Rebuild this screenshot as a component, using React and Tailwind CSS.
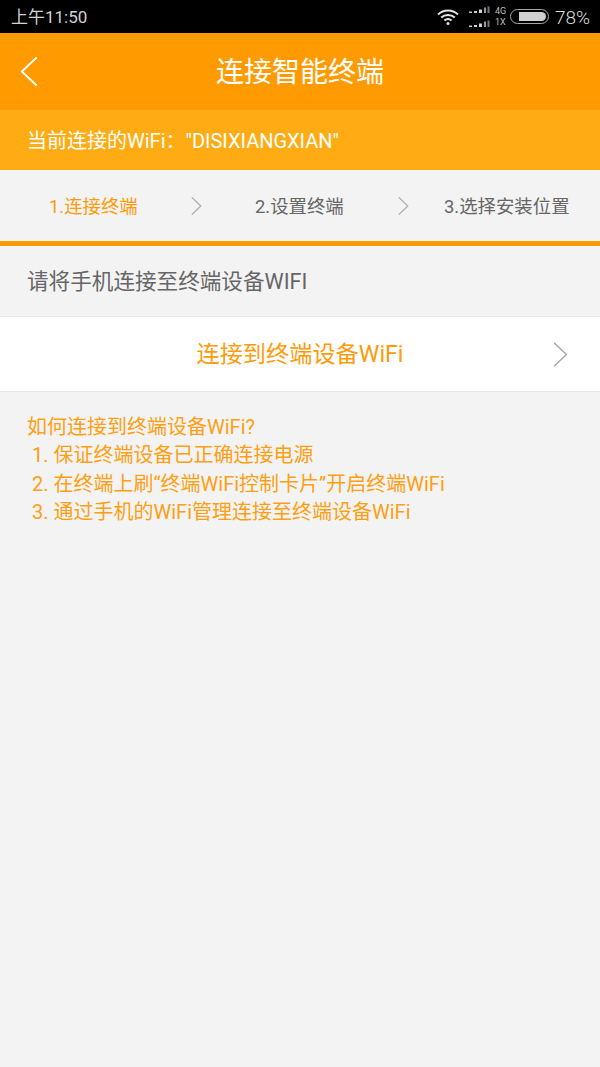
import React from 'react';

const FONT = "font-['Roboto','Noto_Sans_CJK_SC',sans-serif]";

const Chevron = ({ className, color = '#b0b0b0', width = 1.6 }) => (
  <svg className={className} viewBox="0 0 14 24" fill="none">
    <path d="M1.5 1.5 L12.5 12 L1.5 22.5" stroke={color} strokeWidth={width} strokeLinecap="round" strokeLinejoin="round" />
  </svg>
);

const Signal = () => (
  <svg className="w-[21px] h-[8px]" viewBox="0 0 21 8" fill="#d0d0d0">
    <rect x="0" y="5.5" width="3" height="1.5" fill="#c8c8c8" />
    <rect x="5" y="5" width="3" height="2" />
    <rect x="10" y="3.5" width="3" height="3.5" />
    <rect x="15" y="1.5" width="2" height="5.5" fill="#999" />
    <rect x="18.5" y="0.5" width="2" height="6.5" fill="#777" />
  </svg>
);

const StatusBar = () => (
  <div className="h-[33px] bg-black flex items-center justify-between pl-[11px] pr-[10px] text-[#d2d2d2]">
    <span className="text-[17px] leading-none pt-[2px]">上午11:50</span>
    <div className="flex items-center">
      <svg className="w-[22px] h-[18px]" viewBox="0 0 22 18" fill="none" stroke="#e4e4e4" strokeWidth="2">
        <path d="M1 6.5 C6.5 1.2 15.5 1.2 21 6.5" />
        <path d="M4.2 9.6 C8 6 14 6 17.8 9.6" />
        <path d="M7.4 12.6 C9.5 10.8 12.5 10.8 14.6 12.6" />
        <circle cx="11" cy="15.6" r="1.5" fill="#e4e4e4" stroke="none" />
      </svg>
      <div className="ml-[10px] flex flex-col gap-[6px]">
        <Signal />
        <Signal />
      </div>
      <div className="ml-[5px] flex flex-col text-[9px] leading-[11px] text-[#bdbdbd] w-[12px]">
        <span>4G</span>
        <span>1X</span>
      </div>
      <div className="ml-[3px] w-[39px] h-[15px] rounded-full border border-[#a8a8a8] py-[2px] pr-[2px] pl-[8px]">
        <div className="w-full h-full bg-[#cfcfcf] rounded-r-full" />
      </div>
      <span className="ml-[6px] w-[35px] text-[19px] leading-none font-light text-[#dcdcdc] pt-[1px] whitespace-nowrap">78%</span>
    </div>
  </div>
);

const Steps = () => (
  <div className="h-[70px] mt-px flex items-center text-[18.4px] text-[#666]">
    <span className="ml-[49px] w-[142px] pt-[2px] text-[#ff9b0a]">1.连接终端</span>
    <Chevron className="w-[11px] h-[20px]" />
    <span className="ml-[53px] w-[143px] pt-[2px]">2.设置终端</span>
    <Chevron className="w-[11px] h-[20px]" />
    <span className="ml-[35px] pt-[2px] whitespace-nowrap">3.选择安装位置</span>
  </div>
);

export default function App() {
  return (
    <div className={`w-[600px] h-[1067px] bg-[#f3f3f3] overflow-hidden flex flex-col ${FONT}`}>
      <StatusBar />

      <div className="h-[77px] bg-[#ff9b00] relative flex items-center justify-center">
        <Chevron className="absolute left-[19px] top-[23px] w-[20px] h-[31px] rotate-180" color="#ffffff" width={1.5} />
        <h1 className="text-[28px] font-normal text-white pt-[3px]">连接智能终端</h1>
      </div>

      <div className="h-[60px] bg-[#ffac14] flex items-center pl-[27px] pt-[2px] text-[20px] text-white">
        当前连接的WiFi：&quot;DISIXIANGXIAN&quot;
      </div>

      <Steps />
      <div className="h-[5px] bg-[#ff9b00]" />

      <div className="h-[70px] flex items-center pl-[27px] pt-[2px] text-[21.6px] text-[#666]">
        请将手机连接至终端设备WIFI
      </div>

      <div className="h-[76px] bg-white border-y border-[#e6e6e6] relative flex items-center justify-center text-[23.2px] text-[#ff9b0a]">
        连接到终端设备WiFi
        <Chevron className="absolute right-[32px] top-[24px] w-[15px] h-[27px]" color="#a8a8a8" width={1.4} />
      </div>

      <div className="pt-[21px] pl-[27px] text-[20px] leading-[28.4px] text-[#ff9f14]">
        <p>如何连接到终端设备WiFi?</p>
        <p className="pl-[5px]">1. 保证终端设备已正确连接电源</p>
        <p className="pl-[5px]">2. 在终端上刷“终端WiFi控制卡片”开启终端WiFi</p>
        <p className="pl-[5px]">3. 通过手机的WiFi管理连接至终端设备WiFi</p>
      </div>
    </div>
  );
}
